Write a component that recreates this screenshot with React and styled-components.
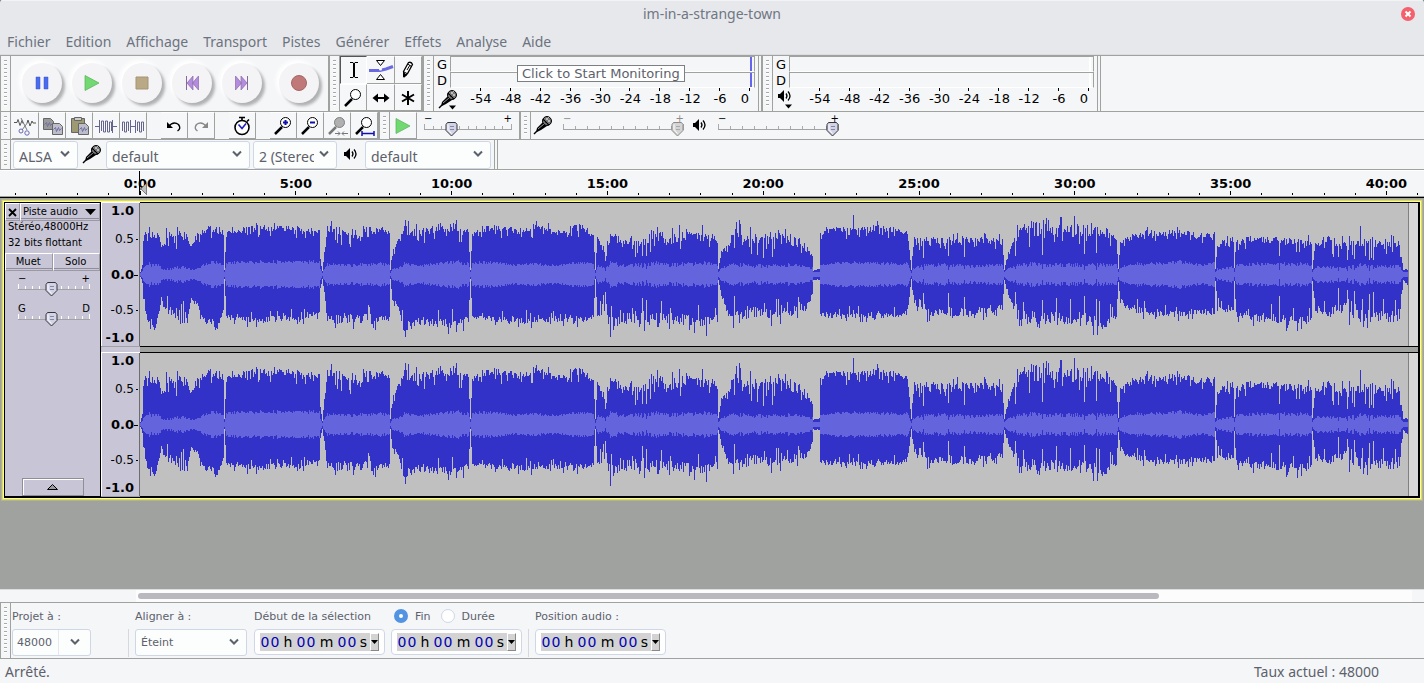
import React from "react";
import styled, { createGlobalStyle, css } from "styled-components";

const GlobalStyle = createGlobalStyle`
  * {
    box-sizing: border-box;
  }

  body {
    margin: 0;
    background: #4f7f8c;
    color: #5c616c;
    font-family: "Noto Sans", sans-serif;
    font-size: 14px;
  }

  button, input, select {
    margin: 0;
    padding: 0;
    border: 0;
    font: inherit;
    color: inherit;
  }

  svg {
    flex: none;
  }
`;

const ui = `"DejaVu Sans", sans-serif`;
const edge = "#a0a2a0";

const Window = styled.div`
  display: flex;
  flex-direction: column;
  min-height: 100vh;
  background: #a0a2a0;
  border-top-left-radius: 3px;
  border-top-right-radius: 3px;
  overflow: hidden;
`;

/* ---------- title and menu ---------- */

const TitleBar = styled.header`
  display: grid;
  grid-template-columns: 32px 1fr 32px;
  align-items: center;
  height: 28px;
  padding-bottom: 2px;
  background: #e7e8eb;
  border-top: 1px solid #f2f3f4;
  color: #6f7684;
`;

const Title = styled.h1`
  grid-column: 2;
  margin: 0;
  font-size: 14px;
  font-weight: 400;
  text-align: center;
`;

const CloseButton = styled.button`
  display: flex;
  justify-content: center;
  align-items: center;
  background: transparent;
`;

const MenuBar = styled.nav`
  display: flex;
  align-items: center;
  gap: 15px;
  height: 27px;
  padding: 0 7px;
  background: #e7e8eb;
  border-bottom: 1px solid #dcdde1;

  a {
    color: #6c7380;
    text-decoration: none;
  }
`;

/* ---------- toolbars ---------- */

const ToolRow = styled.div`
  display: flex;
  height: ${(p) => p.$height}px;
  background: #f5f6f8;
  border-top: 1px solid ${edge};
`;

const Bar = styled.section`
  display: flex;
  align-items: center;
  border-right: 1px solid ${edge};
  ${(p) =>
    p.$double &&
    css`
      border-right: 4px double ${edge};
    `}
  ${(p) =>
    p.$open &&
    css`
      border-right: 0;
    `}
`;

const Grip = styled.div`
  flex: none;
  align-self: stretch;
  width: 11px;
  padding: 4px 3px;
  border: 1px solid ${edge};
  border-width: 0 1px 0 1px;
  background: repeating-linear-gradient(#a8a8a8 0 1px, #fff 1px 2px, transparent 2px 4px) content-box #f7f8f9;
`;

const Transport = styled.div`
  display: flex;
  align-items: center;
  gap: 10px;
  width: 317px;
  padding: 0 0 2px 11px;
`;

const RoundButton = styled.button`
  display: flex;
  justify-content: center;
  align-items: center;
  width: 40px;
  height: 40px;
  border-radius: 50%;
  background: #f4f4f6;
  box-shadow: 3px 3px 3px #b0b1b3, -2px -2px 4px 1px #fff;

  &:last-child {
    margin-left: 7px;
  }
`;

const ToolGrid = styled.div`
  display: grid;
  grid-template-columns: 27px 28px 27px;
  grid-template-rows: 28px 27px;
`;

const ToolButton = styled.button`
  display: flex;
  justify-content: center;
  align-items: center;
  width: 27px;
  height: 100%;
  background: #f6f7f9;
  border-top: 1px solid #fff;
  border-right: 1px solid ${edge};
  border-bottom: 1px solid ${edge};

  ${ToolGrid} & {
    width: 100%;
  }

  ${(p) =>
    p.$pressed &&
    css`
      border-top: 1px solid #555;
      border-left: 1px solid #555;
      border-right-color: #fff;
      border-bottom-color: #fff;
    `}
`;

const EditButtons = styled.div`
  display: flex;
  align-self: stretch;
  margin: 0 ${(p) => p.$after || 0}px 0 ${(p) => p.$before || 0}px;
`;

const MeterArea = styled.div`
  position: relative;
  align-self: stretch;
`;

const Meter = styled.div`
  display: grid;
  grid-template-columns: 16px 305px;
  grid-template-rows: 16px 16px 22px;
  width: 324px;
  color: #000;
  font-family: ${ui};
  font-size: 13px;
  line-height: 16px;
`;

const Channel = styled.span`
  padding: 1px 0 0 3px;
`;

const MeterBar = styled.div`
  border: 1px solid ${edge};
  border-bottom-color: #fff;
  background: linear-gradient(${(p) => p.$peak}, ${(p) => p.$peak}) 299px 0 / 2px 100% no-repeat;
`;

const MeterIcon = styled.button`
  display: flex;
  align-items: flex-start;
  width: 24px;
  padding: 1px 0 0 4px;
  background: transparent;
`;

const Scale = styled.div`
  display: flex;
  padding-left: 16px;

  span {
    width: 30px;
    padding-top: 3px;
    text-align: center;
    background: linear-gradient(#000, #000) 14px 0 / 1px 3px no-repeat;
  }

  span:last-child {
    width: 20px;
  }
`;

const Hint = styled.button`
  position: absolute;
  left: 83px;
  top: 9px;
  height: 17px;
  padding: 0 4px;
  border: 1px solid #7d8083;
  background: #fff;
  color: #5c616c;
  font-family: ${ui};
  font-size: 13px;
  line-height: 15px;
  white-space: nowrap;
`;

/* ---------- sliders ---------- */

const SliderBox = styled.label`
  position: relative;
  display: block;
  width: ${(p) => p.$width}px;
  height: 22px;
  color: ${(p) => (p.$off ? "#8c8c8c" : "#000")};
  font-family: ${ui};
  font-size: 10px;
  line-height: 8px;

  svg {
    position: absolute;
    left: 0;
    top: 0;
    overflow: visible;
  }

  input {
    position: absolute;
    left: 0;
    top: 4px;
    width: 100%;
    height: 16px;
    opacity: 0;
  }
`;

const SliderEnds = styled.span`
  display: flex;
  justify-content: space-between;
`;

function Slider({ width, value, name, ends = ["−", "+"], off, steps = 10, light }) {
  const x = Math.round((width * value) / 100);
  const ticks = Array.from({ length: steps + 1 }, (_, i) => Math.round((i * (width - 1)) / steps));
  return (
    <SliderBox $width={width} $off={off}>
      <SliderEnds>
        <span>{ends[0]}</span>
        <span>{ends[1]}</span>
      </SliderEnds>
      <svg width={width} height="22" aria-hidden="true">
        {ticks.map((t, i) => (
          <path
            key={t}
            d={i % steps ? `M${t + 0.5} 11v3` : `M${t + 0.5} 9v5`}
            stroke={light ? "#fff" : "#aaa"}
          />
        ))}
        <path d={`M0 14.5h${width}`} stroke="#a3a3a3" />
        <path
          d={`M${x - 4.5} 7.5h8l1.500 2v6l-5.500 5.500-5.500-5.500v-6z`}
          fill={off ? "#d4d4d4" : "#d3d3e6"}
          stroke={off ? "#8b8b8b" : "#34343c"}
        />
        <path d={`M${x - 4} 9.500v5l3.500 4`} fill="none" stroke="#fff" />
        <path d={`M${x - 2} 11.500h4M${x - 2} 14.500h4`} stroke={off ? "#aaa" : "#8585a6"} />
      </svg>
      <input type="range" aria-label={name} defaultValue={value} disabled={off} />
    </SliderBox>
  );
}

const SliderSlot = styled.div`
  padding: 0 ${(p) => p.$right}px 0 ${(p) => p.$left}px;
`;

/* ---------- drop-downs ---------- */

const SelectBox = styled.span`
  position: relative;
  display: inline-flex;
  width: ${(p) => p.$width}px;
  height: ${(p) => (p.$small ? 27 : 28)}px;
  margin-right: ${(p) => p.$after || 0}px;

  svg {
    position: absolute;
    right: ${(p) => (p.$combo ? 11 : 8)}px;
    top: 9px;
    pointer-events: none;
  }
`;

const NativeSelect = styled.select`
  width: 100%;
  padding: 4px 22px 0 5px;
  appearance: none;
  background: #fcfdfd;
  border: 1px solid #cfd6e6;
  border-radius: 3px;
  ${(p) =>
    p.$small &&
    css`
      padding: 0 20px 0 5px;
      font-family: ${ui};
      font-size: 11px;
    `}
  ${(p) =>
    p.$combo &&
    css`
      padding-left: 4px;
      background: linear-gradient(#e6e8ee, #e6e8ee) 45px 0 / 1px 100% no-repeat #fcfdfd;
    `}
`;

function Chevron() {
  return (
    <svg width="10" height="8" viewBox="0 0 10 8" aria-hidden="true">
      <path d="M1 1.500l4 4 4-4" fill="none" stroke="#5c616c" strokeWidth="2" />
    </svg>
  );
}

function Select({ label, value, width, after, small, combo, id }) {
  return (
    <SelectBox $width={width} $after={after} $small={small} $combo={combo}>
      <NativeSelect id={id} aria-label={label} $small={small} $combo={combo}>
        <option>{value}</option>
      </NativeSelect>
      <Chevron />
    </SelectBox>
  );
}

const DeviceIcon = styled.span`
  display: flex;
  justify-content: center;
  width: ${(p) => p.$width}px;
`;

/* ---------- icons ---------- */

function Mic({ menu }) {
  return (
    <svg width="20" height="21" viewBox="0 0 20 21" aria-hidden="true">
      <path d="M1 19l3-3" stroke="#000" strokeWidth="1.500" />
      <path d="M3 17l1-4 6-6 4 4-6 4-4 2z" fill="#000" />
      <path d="M5 14l6-5" stroke="#999" />
      <circle cx="14" cy="6" r="4.500" fill="#777" stroke="#000" />
      <path d="M11 4l5 5M13 3l4 4M11 7l5-5M13 9l4-4" stroke="#ddd" strokeWidth="0.700" />
      <path d="M10 4l6 6" stroke="#000" strokeWidth="1.500" />
      {menu && <path d="M11 16.500h7l-3.500 4z" fill="#000" />}
    </svg>
  );
}

function Speaker({ menu }) {
  return (
    <svg width="16" height={menu ? 20 : 15} viewBox={menu ? "0 0 16 20" : "0 0 16 15"} aria-hidden="true">
      <path d="M1 5h2l4-4v12l-4-4h-2z" fill="#000" />
      <path d="M9 4.500q2 2.500 0 5M11 2.500q4 4.500 0 9" fill="none" stroke="#000" strokeWidth="1.300" />
      {menu && <path d="M8 15.500h7l-3.500 4z" fill="#000" />}
    </svg>
  );
}

const Pause = () => (
  <svg width="14" height="14">
    <path d="M1 1h4v12H1zM9 1h4v12H9z" fill="#4a6af0" stroke="#3c55c8" strokeWidth="0.500" />
  </svg>
);
const Play = () => (
  <svg width="16" height="16">
    <path d="M1 .5L15 8 1 15.500z" fill="#72d872" stroke="#55b055" strokeWidth="0.700" />
  </svg>
);
const Stop = () => (
  <svg width="14" height="14">
    <path d="M1 1h12v12H1z" fill="#baa985" stroke="#a49575" />
  </svg>
);
const Rewind = () => (
  <svg width="14" height="16">
    <path d="M1.500 1v14" stroke="#85699d" />
    <path d="M8 1v14L2 8zM13.500 1v14L7.500 8z" fill="#b58be0" stroke="#8a6ba8" strokeWidth="0.700" />
  </svg>
);
const Forward = () => (
  <svg width="14" height="16">
    <path d="M.5 1v14l6-7zM6 1v14l6-7z" fill="#b58be0" stroke="#8a6ba8" strokeWidth="0.700" />
    <path d="M12.500 1v14" stroke="#85699d" />
  </svg>
);
const Record = () => (
  <svg width="18" height="18">
    <circle cx="9" cy="9" r="7.500" fill="#c07878" stroke="#a56666" />
  </svg>
);

const Glyph = ({ children, ...rest }) => (
  <svg width="24" height="24" viewBox="0 0 24 24" fill="none" stroke="#000" aria-hidden="true" {...rest}>
    {children}
  </svg>
);

const Caret = () => (
  <Glyph>
    <path d="M8 4.500h3l1 1 1-1h3M8 19.500h3l1-1 1 1h3" />
    <path d="M12 5v14" strokeWidth="2" />
  </Glyph>
);
const Envelope = () => (
  <svg width="26" height="24" viewBox="0 0 26 24" fill="none" aria-hidden="true">
    <path d="M1 12.500h11l6-1.500 7-2.500" stroke="#6a6ae0" strokeWidth="3" />
    <path d="M8.500 2.500h8l-4 5zM8.500 21.500h8l-4-5z" fill="#fff" stroke="#000" />
    <circle cx="12.500" cy="11" r="1.500" fill="#fff" />
  </svg>
);
const Pencil = () => (
  <Glyph>
    <path d="M8.500 18.500l-1-5 5-9q3-1 4 2l-5 9z" fill="#fff" strokeWidth="1.300" />
    <path d="M12 6l4 3M7 13.500l4 2M11 12l3-5" />
    <path d="M7.500 15v4l3-2z" fill="#000" />
  </Glyph>
);
const Lens = ({ dim, children }) => (
  <Glyph>
    <path d="M11 13l-7 7" stroke={dim ? "#777" : "#000"} strokeWidth="2.500" />
    <circle cx="14.500" cy="8.500" r="5" fill={dim ? "#b0b0b0" : "#fff"} stroke={dim ? "#808080" : "#000"} />
    {children}
  </Glyph>
);
const Shift = () => (
  <Glyph>
    <path d="M5 12h14" strokeWidth="2" />
    <path d="M9 7.500v9L3.500 12zM15 7.500v9l5.500-4.500z" fill="#000" stroke="none" />
  </Glyph>
);
const Multi = () => (
  <Glyph strokeWidth="2">
    <path d="M12 5v14M6 8.500l12 7M18 8.500l-12 7" />
  </Glyph>
);
const Cut = () => (
  <Glyph stroke="#555">
    <path d="M1 8.500h3l1-3 2 6 2-5 1 3M14 9l1-3 2 6 2-5 1 2h3" />
    <path d="M8 4l6 12M15 8l-6 8" stroke="#777" />
    <circle cx="8" cy="17" r="2" stroke="#6a6ab4" />
    <circle cx="14" cy="19" r="2.200" stroke="#6a6ab4" />
  </Glyph>
);
const Sheet = ({ x, y, fill }) => (
  <>
    <path d={`M${x} ${y}h7l3 3v8h-10z`} fill={fill} stroke="#666" />
    <path d={`M${x + 1} ${y + 6}l2-2 1 4 2-4 1 3 2-2`} stroke="#7070a0" />
  </>
);
const Copy = () => (
  <Glyph>
    <Sheet x={3.5} y={4.5} fill="#999" />
    <Sheet x={12.5} y={9.5} fill="#bcbccb" />
  </Glyph>
);
const Paste = () => (
  <Glyph>
    <path d="M4.500 4.500h13v14h-13z" fill="#9d9a72" stroke="#666" />
    <path d="M7.500 3.500h7v3h-7z" fill="#ccc" stroke="#666" />
    <Sheet x={11.5} y={9.5} fill="#bcbccb" />
  </Glyph>
);
const Trim = () => (
  <Glyph stroke="#64648c">
    <path d="M1 12.500h5M18 12.500h5M5.500 6v13M18.500 6v13M7.500 17V7h2v11h2V7h2v11h2V8h2v9" />
  </Glyph>
);
const Silence = () => (
  <Glyph stroke="#64648c">
    <path d="M1.500 17V8h2v10h2V8h2v9M9.500 6v13M9 12.500h5M14.500 6v13M16.500 17V8h2v10h2V8h2v9" />
  </Glyph>
);
const Undo = () => (
  <Glyph>
    <path d="M6.500 12.500q5-6 10-2 3 4-1 6.500" strokeWidth="1.400" />
    <path d="M5 8v6h6z" fill="#000" stroke="none" />
  </Glyph>
);
const Redo = () => (
  <Glyph stroke="#888">
    <path d="M17.500 12.500q-5-6-10-2-3 4 1 6.500" strokeWidth="1.400" />
    <path d="M19 8v6h-6z" fill="#888" stroke="none" />
  </Glyph>
);
const Clock = () => (
  <Glyph>
    <circle cx="12" cy="13.500" r="7" fill="#fff" strokeWidth="1.600" />
    <path d="M9 3.500h6M12 3v4M17 7.500l2-2" strokeWidth="1.600" />
    <path d="M8.500 10.500l3.500 4 4-5" stroke="#2020c0" strokeWidth="1.600" />
  </Glyph>
);

/* ---------- timeline ---------- */

const Ruler = styled.div`
  height: 29px;
  background: #f5f6f8;
  border-top: 1px solid ${edge};
  border-bottom: 1px solid #000;

  svg {
    display: block;
  }

  text {
    font-family: ${ui};
    font-size: 13px;
    font-weight: 700;
    text-anchor: middle;
  }
`;

const START = 140;
const VIEW = 1424;
const MINUTE = 31.16;

function TimeRuler() {
  const minutes = Array.from({ length: 46 }, (_, i) => i - 4);
  const at = (m) => `${((START + m * MINUTE) / VIEW) * 100}%`;
  return (
    <Ruler>
      <svg width="100%" height="27" shapeRendering="crispEdges">
        <path d="M0 .5H4000" stroke="#fff" />
        <path d="M0 26.500H4000" stroke="#a0a2a0" />
        {minutes.map((m) => (
          <line key={m} x1={at(m)} x2={at(m)} y1={m % 5 ? 23 : 21} y2="25" stroke="#000" />
        ))}
        {minutes
          .filter((m) => m >= 0 && m % 5 === 0)
          .map((m) => (
            <text key={m} x={at(m)} y="18">{`${m}:00`}</text>
          ))}
        <path d="M146.500 14v10l-6-5z" fill="#c0c0c0" stroke="#808080" />
        <path d="M139.500 1v24" stroke="#000" />
      </svg>
    </Ruler>
  );
}

/* ---------- track ---------- */

const TrackFrame = styled.main`
  display: grid;
  grid-template-columns: 96px 39px 1fr;
  margin: 4px 4px 2px;
  background: #a0a2a0;
  border: 1px solid #000;
  border-width: 1px 2px 2px 1px;
  outline: 1px solid #ffff80;
  box-shadow: 0 0 0 2px #d8d878, 0 0 0 3px #b4b48c;
`;

const TrackPanel = styled.aside`
  display: flex;
  flex-direction: column;
  background: #c8c6d6;
  border-right: 1px solid #000;
  color: #000;
  font-family: ${ui};
  font-size: 10px;
  line-height: 16px;
`;

const PanelRow = styled.div`
  display: grid;
  grid-template-columns: ${(p) => p.$columns};
  height: 16px;
  border-bottom: 1px solid #8f8e98;
`;

const PanelButton = styled.button`
  display: flex;
  justify-content: ${(p) => (p.$spread ? "space-between" : "center")};
  align-items: center;
  padding: 0 3px 0 2px;
  background: transparent;
  border: 1px solid #fff;
  border-right-color: #9a99a4;
  border-bottom-color: #9a99a4;
  white-space: nowrap;
`;

const Format = styled.p`
  height: 34px;
  margin: 0;
  padding-left: 3px;
`;

const Gains = styled.div`
  display: grid;
  gap: 8px;
  flex: 1;
  align-content: start;
  padding: 6px 0 0 13px;
`;

const Collapse = styled.button`
  display: flex;
  justify-content: center;
  align-items: center;
  align-self: center;
  width: 62px;
  height: 18px;
  background: transparent;
  border: 1px solid #8f8e98;
  box-shadow: inset 1px 1px #fff;
`;

const Lanes = styled.div`
  display: grid;
  grid-template-rows: 143px 143px;
  gap: 7px;
`;

const Scales = styled(Lanes)`
  background: #c8c6d6;
`;

const Levels = styled.div`
  display: grid;
  grid-template-rows: 16px 40px 31px 40px 16px;
  align-items: center;
  background: #c8c6d6;
  border-left: 1px solid #fff;
  border-right: 1px solid #6c6c70;
  box-shadow: 0 1px #a0a2a0, 0 -1px #fff;
  color: #000;
  font-family: ${ui};
  text-align: right;
`;

const Level = styled.span`
  padding-right: 5px;
  font-size: ${(p) => (p.$bold ? "13px" : "12px")};
  font-weight: ${(p) => (p.$bold ? 700 : 400)};
  line-height: 16px;
  background: linear-gradient(#000, #000) right 1px top 8px / ${(p) => p.$tick}px 1px no-repeat;
`;

const Lane = styled.div`
  display: flex;
  padding-right: 9px;
  background: #d8d8d8;
  box-shadow: 0 1px #000, 0 -1px #000;

  svg {
    display: block;
    flex: 1;
    min-width: 0;
    height: 143px;
    background: #c0c0c0;
    border-right: 1px solid #808080;
  }
`;

// [x, peak above, peak below, rms, jitter]
const shape = [
  [0, 2, 2, 1, 0], [2, 8, 8, 3, 0.1], [3, 32, 24, 5, 0.1], [5, 46, 34, 8, 0.16], [9, 42, 48, 10, 0.18],
  [13, 38, 50, 9, 0.18], [18, 42, 42, 9, 0.16], [21, 28, 22, 6, 0.1], [24, 28, 30, 4, 0.1], [27, 42, 34, 5, 0.18],
  [36, 40, 38, 6, 0.2], [45, 38, 46, 7, 0.2], [51, 27, 25, 4, 0.1], [58, 40, 32, 6, 0.15], [66, 44, 48, 10, 0.12],
  [77, 45, 50, 12, 0.14], [83, 40, 36, 9, 0.08], [84, 4, 4, 2, 0], [86, 40, 42, 11, 0.07], [110, 46, 46, 12, 0.09],
  [140, 46, 43, 12, 0.09], [160, 45, 43, 12, 0.09], [179, 43, 38, 12, 0.09], [180, 14, 14, 5, 0.1], [182, 3, 4, 1, 0],
  [184, 22, 18, 6, 0.1], [187, 46, 46, 10, 0.13], [205, 40, 43, 9, 0.16], [230, 42, 44, 10, 0.16], [249, 44, 44, 10, 0.1],
  [250, 4, 4, 1, 0], [252, 22, 24, 5, 0.1], [258, 34, 34, 6, 0.1], [264, 44, 52, 10, 0.14], [280, 43, 46, 8, 0.14],
  [300, 47, 48, 11, 0.12], [318, 46, 50, 12, 0.14], [326, 42, 45, 9, 0.1], [328, 43, 46, 12, 0.1], [330, 4, 4, 2, 0],
  [332, 40, 42, 11, 0.08], [352, 47, 44, 12, 0.09], [374, 43, 45, 9, 0.1], [394, 47, 45, 10, 0.1], [418, 42, 44, 8, 0.1],
  [440, 47, 45, 12, 0.1], [453, 40, 42, 10, 0.06], [455, 4, 4, 1, 0], [457, 38, 42, 8, 0.1], [464, 25, 28, 6, 0.16],
  [470, 36, 52, 11, 0.2], [482, 32, 42, 8, 0.2], [500, 33, 46, 9, 0.22], [515, 39, 42, 11, 0.16], [530, 34, 46, 9, 0.22],
  [545, 40, 44, 10, 0.18], [563, 36, 48, 11, 0.2], [577, 34, 42, 9, 0.12], [578, 5, 5, 2, 0], [581, 22, 20, 6, 0.1],
  [588, 28, 36, 8, 0.1], [594, 38, 40, 9, 0.24], [610, 34, 35, 8, 0.22], [632, 35, 37, 8, 0.24], [655, 33, 36, 9, 0.22],
  [666, 24, 32, 7, 0.12], [672, 18, 20, 6, 0.1], [673, 4, 5, 2, 0.1], [679, 5, 5, 2, 0.1], [680, 40, 38, 9, 0.08],
  [692, 45, 41, 11, 0.08], [714, 43, 40, 11, 0.1], [740, 46, 41, 11, 0.1], [760, 42, 39, 10, 0.1], [767, 42, 38, 11, 0.08],
  [771, 4, 4, 1, 0], [773, 32, 26, 6, 0.1], [783, 34, 37, 9, 0.15], [800, 32, 36, 9, 0.18], [830, 34, 38, 8, 0.16],
  [862, 32, 33, 9, 0.16], [864, 4, 5, 2, 0], [867, 18, 18, 5, 0.1], [872, 30, 30, 7, 0.12], [880, 44, 42, 10, 0.2],
  [910, 43, 43, 9, 0.2], [940, 43, 44, 9, 0.2], [965, 42, 46, 9, 0.18], [976, 34, 40, 9, 0.1], [978, 5, 7, 2, 0],
  [980, 32, 26, 7, 0.1], [995, 36, 34, 10, 0.14], [1010, 41, 38, 10, 0.1], [1040, 41, 39, 12, 0.1], [1060, 39, 37, 9, 0.1],
  [1074, 40, 39, 11, 0.06], [1075, 5, 6, 2, 0], [1077, 28, 28, 5, 0.2], [1093, 34, 36, 7, 0.14], [1094, 12, 12, 4, 0],
  [1096, 30, 38, 8, 0.15], [1112, 36, 42, 10, 0.13], [1140, 33, 44, 10, 0.14], [1160, 32, 46, 10, 0.14], [1171, 30, 42, 9, 0.1],
  [1172, 5, 6, 2, 0], [1175, 30, 34, 7, 0.16], [1190, 34, 36, 7, 0.2], [1207, 26, 32, 6, 0.2], [1220, 33, 42, 9, 0.22],
  [1240, 30, 40, 7, 0.22], [1259, 30, 42, 8, 0.16], [1262, 12, 14, 3, 0.1], [1263, 4, 5, 2, 0.15], [1267, 5, 10, 2, 0.2],
];

const notches = [465, 502, 506, 783, 808, 824, 875, 902, 944, 956, 1094, 1139, 1198, 1207, 1214, 1229, 1233];
const spikes = [591, 599, 630, 638, 645, 713, 877, 895, 935, 1048, 1168, 1209, 1220];

function buildWave(seed, above, below) {
  let state = seed;
  const rand = () => {
    state = (state * 1664525 + 1013904223) % 4294967296;
    return state / 4294967296;
  };
  let peak = "";
  let rms = "";
  let k = 0;
  for (let x = 0; x < 1268; x++) {
    while (k < shape.length - 2 && x >= shape[k + 1][0]) k++;
    const a = shape[k];
    const b = shape[k + 1];
    const t = Math.min(1, (x - a[0]) / (b[0] - a[0]));
    const [, up, down, soft, jitter] = a.map((v, i) => v + (b[i] - v) * t);
    const vary = (v) => {
      const r = rand();
      const burst = r > 0.9 ? jitter : r < 0.1 ? -jitter * 1.6 : 0;
      return v * (1 + jitter * (rand() - 0.5) * 1.6 + burst);
    };
    const notch = notches.includes(x) ? 0.5 : 1;
    const spike = spikes.includes(x);
    const top = Math.round(Math.min(70, vary(up) * notch * above * (spike ? 1.3 : 1)));
    const bottom = Math.round(Math.min(62, vary(down) * notch * below * (spike ? 1.12 : 1)));
    const inner = Math.max(1, Math.round(soft * notch * (1 + (rand() - 0.5) * (jitter * 2 + 0.1))));
    peak += `M${x} ${71 - top}h1V${72 + bottom}h-1z`;
    rms += `M${x} ${71 - inner}h1V${72 + inner}h-1z`;
  }
  return { peak, rms };
}

const channels = [buildWave(7, 1, 1), buildWave(7, 1.13, 0.94)];

function Waveform({ wave }) {
  return (
    <svg viewBox="0 0 1268 143" preserveAspectRatio="none" shapeRendering="crispEdges" aria-hidden="true">
      <path d={wave.peak} fill="#3232c8" />
      <path d={wave.rms} fill="#6464dc" />
    </svg>
  );
}

function LevelScale() {
  return (
    <Levels>
      <Level $bold $tick={0}>1.0</Level>
      <Level $tick={2}>0.5</Level>
      <Level $bold $tick={4}>0.0</Level>
      <Level $tick={2}>-0.5</Level>
      <Level $bold $tick={0}>-1.0</Level>
    </Levels>
  );
}

/* ---------- bottom ---------- */

const Empty = styled.div`
  flex: 1;
`;

const ScrollRow = styled.div`
  height: 13px;
  padding: 0 12px 0 136px;
  background: #f5f6f8;
  border-top: 1px solid #dcdde0;
`;

const ScrollTrack = styled.div`
  height: 12px;
  padding: 3px 2px;
  background: #fcfcfd;
`;

const ScrollThumb = styled.div`
  width: 80.3%;
  height: 6px;
  border-radius: 3px;
  background: #b8b8be;
`;

const SelectionBar = styled.footer`
  display: flex;
  height: 57px;
  background: #f5f6f8;
  border-top: 1px solid ${edge};
  border-bottom: 1px solid ${edge};
  font-family: ${ui};
  font-size: 11px;
`;

const Field = styled.div`
  display: grid;
  grid-template-rows: 26px 27px;
  align-items: center;
  align-self: start;
  width: ${(p) => p.$width}px;
  padding-left: ${(p) => p.$left || 1}px;
`;

const Divider = styled.i`
  align-self: end;
  width: 1px;
  height: 28px;
  margin-bottom: 1px;
  background: #d6d8dd;
`;

const RadioRow = styled.div`
  display: flex;
  align-items: center;
  gap: 10px;
  padding-left: 3px;

  label {
    display: flex;
    align-items: center;
    gap: 7px;
  }

  input {
    appearance: none;
    width: 14px;
    height: 14px;
    border: 1px solid #cfd6e6;
    border-radius: 50%;
    background: #fff;
  }

  input:checked {
    border: 5px solid #5294e2;
  }
`;

const TimeBox = styled.div`
  display: flex;
  align-items: center;
  align-self: start;
  width: 131px;
  height: 26px;
  padding: 0 5px;
  background: #fff;
  border: 1px solid #cfd6e6;
  border-radius: 4px;
`;

const TimeDigits = styled.div`
  display: grid;
  grid-template-columns: 10px 10px 16px 10px 10px 21px 10px 10px 1fr;
  align-items: center;
  flex: 1;
  height: 18px;
  background: #d3d3d3;
  color: #000;
  font-size: 14px;
  line-height: 18px;
  text-align: center;
`;

const Digit = styled.input`
  width: 10px;
  height: 18px;
  background: transparent;
  color: #0000b4;
  text-align: center;
`;

const TimeMenu = styled.button`
  display: flex;
  justify-content: center;
  align-items: center;
  width: 9px;
  height: 18px;
  background: #d3d3d3;
  border: 1px solid #fff;
  border-right-color: #888;
  border-bottom-color: #888;
`;

const StatusBar = styled.div`
  display: flex;
  justify-content: space-between;
  align-items: center;
  height: 24px;
  padding: 0 45px 0 5px;
  background: #f5f6f8;
`;

function TimeField({ name }) {
  return (
    <TimeBox role="group" aria-label={name}>
      <TimeDigits>
        {["h", "m", "s"].map((unit) => (
          <React.Fragment key={unit}>
            <Digit aria-label={`${name} ${unit} 1`} defaultValue="0" maxLength={1} />
            <Digit aria-label={`${name} ${unit} 2`} defaultValue="0" maxLength={1} />
            <span>{unit}</span>
          </React.Fragment>
        ))}
      </TimeDigits>
      <TimeMenu aria-label={`${name} format`}>
        <svg width="7" height="4">
          <path d="M0 0h7L3.500 4z" fill="#000" />
        </svg>
      </TimeMenu>
    </TimeBox>
  );
}

function LevelMeter({ name, icon, peak, children }) {
  return (
    <MeterArea>
      <Meter>
        <Channel>G</Channel>
        <MeterBar $peak={peak} />
        <Channel>D</Channel>
        <MeterBar $peak={peak} />
        <MeterIcon aria-label={name}>{icon}</MeterIcon>
        <Scale>
          {[-54, -48, -42, -36, -30, -24, -18, -12, -6, 0].map((db) => (
            <span key={db}>{db}</span>
          ))}
        </Scale>
      </Meter>
      {children}
    </MeterArea>
  );
}

const menus = ["Fichier", "Edition", "Affichage", "Transport", "Pistes", "Générer", "Effets", "Analyse", "Aide"];

function App() {
  return (
    <Window>
      <GlobalStyle />
      <TitleBar>
        <Title>im-in-a-strange-town</Title>
        <CloseButton aria-label="Fermer">
          <svg width="14" height="14">
            <circle cx="7" cy="7" r="7" fill="#f4606c" />
            <path d="M4.500 4.500l5 5M9.500 4.500l-5 5" stroke="#fff" strokeWidth="2" />
          </svg>
        </CloseButton>
      </TitleBar>
      <MenuBar>
        {menus.map((m) => (
          <a href="#" key={m}>
            {m}
          </a>
        ))}
      </MenuBar>

      <ToolRow $height={56}>
        <Bar>
          <Grip />
          <Transport>
            <RoundButton aria-label="Pause"><Pause /></RoundButton>
            <RoundButton aria-label="Lecture"><Play /></RoundButton>
            <RoundButton aria-label="Stop"><Stop /></RoundButton>
            <RoundButton aria-label="Début"><Rewind /></RoundButton>
            <RoundButton aria-label="Fin"><Forward /></RoundButton>
            <RoundButton aria-label="Enregistrer"><Record /></RoundButton>
          </Transport>
        </Bar>
        <Bar>
          <Grip />
          <ToolGrid>
            <ToolButton $pressed aria-label="Sélection"><Caret /></ToolButton>
            <ToolButton aria-label="Niveau"><Envelope /></ToolButton>
            <ToolButton aria-label="Retouche"><Pencil /></ToolButton>
            <ToolButton aria-label="Zoom"><Lens /></ToolButton>
            <ToolButton aria-label="Glissement"><Shift /></ToolButton>
            <ToolButton aria-label="Multi-outils"><Multi /></ToolButton>
          </ToolGrid>
        </Bar>
        <Bar $double>
          <Grip />
          <LevelMeter name="Niveau d'enregistrement" icon={<Mic menu />} peak="#6464f0">
            <Hint>Click to Start Monitoring</Hint>
          </LevelMeter>
        </Bar>
        <Bar $double>
          <Grip />
          <LevelMeter name="Niveau de lecture" icon={<Speaker menu />} peak="#fff" />
        </Bar>
      </ToolRow>

      <ToolRow $height={28}>
        <Bar>
          <Grip />
          <EditButtons $before={1} $after={14}>
            <ToolButton aria-label="Couper"><Cut /></ToolButton>
            <ToolButton aria-label="Copier"><Copy /></ToolButton>
            <ToolButton aria-label="Coller"><Paste /></ToolButton>
            <ToolButton aria-label="Rogner"><Trim /></ToolButton>
            <ToolButton aria-label="Silence"><Silence /></ToolButton>
          </EditButtons>
          <EditButtons $after={14}>
            <ToolButton aria-label="Annuler"><Undo /></ToolButton>
            <ToolButton aria-label="Refaire"><Redo /></ToolButton>
          </EditButtons>
          <EditButtons $after={14}>
            <ToolButton aria-label="Synchroniser"><Clock /></ToolButton>
          </EditButtons>
          <EditButtons>
            <ToolButton aria-label="Zoom avant">
              <Lens><path d="M12 8.500h5M14.500 6v5" stroke="#1010b0" strokeWidth="2" /></Lens>
            </ToolButton>
            <ToolButton aria-label="Zoom arrière">
              <Lens><path d="M12 8.500h5" stroke="#1010b0" strokeWidth="2" /></Lens>
            </ToolButton>
            <ToolButton aria-label="Zoom sélection">
              <Lens dim><path d="M10 19.500h5M17 19.500h6M13 17.500l2 2-2 2M19 17.500l-2 2 2 2" stroke="#777" /></Lens>
            </ToolButton>
            <ToolButton aria-label="Zoom projet">
              <Lens><path d="M10 19.500h12M10 17v5M22 17v5" stroke="#1010b0" strokeWidth="1.500" /></Lens>
            </ToolButton>
          </EditButtons>
        </Bar>
        <Bar>
          <Grip />
          <EditButtons>
            <ToolButton aria-label="Lecture à vitesse variable"><Play /></ToolButton>
          </EditButtons>
          <SliderSlot $left={7} $right={7}>
            <Slider name="Vitesse de lecture" width={88} value={32} />
          </SliderSlot>
        </Bar>
        <Bar $open>
          <Grip />
          <DeviceIcon $width={24}><Mic /></DeviceIcon>
          <SliderSlot $left={8} $right={6}>
            <Slider name="Volume d'enregistrement" width={121} value={95} off />
          </SliderSlot>
          <DeviceIcon $width={20}><Speaker /></DeviceIcon>
          <SliderSlot $left={8} $right={12}>
            <Slider name="Volume de lecture" width={121} value={95} />
          </SliderSlot>
        </Bar>
      </ToolRow>

      <ToolRow $height={30}>
        <Bar $double>
          <Grip />
          <SliderSlot $left={2} $right={0}>
            <Select label="Hôte audio" value="ALSA" width={65} />
          </SliderSlot>
          <DeviceIcon $width={28}><Mic /></DeviceIcon>
          <Select label="Entrée" value="default" width={144} after={3} />
          <Select label="Canaux" value="2 (Stereo)" width={84} />
          <DeviceIcon $width={28}><Speaker /></DeviceIcon>
          <Select label="Sortie" value="default" width={126} after={3} />
        </Bar>
      </ToolRow>

      <TimeRuler />

      <TrackFrame>
        <TrackPanel>
          <PanelRow $columns="15px 1fr">
            <PanelButton aria-label="Fermer la piste">
              <svg width="9" height="9">
                <path d="M1 1l7 7M8 1L1 8" stroke="#000" strokeWidth="1.800" />
              </svg>
            </PanelButton>
            <PanelButton $spread>
              Piste audio
              <svg width="11" height="6">
                <path d="M0 0h11L5.500 6z" />
              </svg>
            </PanelButton>
          </PanelRow>
          <Format>
            Stéréo,48000Hz
            <br />
            32 bits flottant
          </Format>
          <PanelRow $columns="1fr 1fr">
            <PanelButton>Muet</PanelButton>
            <PanelButton>Solo</PanelButton>
          </PanelRow>
          <Gains>
            <Slider name="Gain" width={72} value={47} light />
            <Slider name="Panoramique" width={72} value={47} ends={["G", "D"]} light />
          </Gains>
          <Collapse aria-label="Réduire">
            <svg width="11" height="6">
              <path d="M.5 5.500h10L5.500 .5z" fill="#9a99a4" stroke="#000" />
            </svg>
          </Collapse>
        </TrackPanel>
        <Scales>
          <LevelScale />
          <LevelScale />
        </Scales>
        <Lanes>
          {channels.map((wave, i) => (
            <Lane key={i}>
              <Waveform wave={wave} />
            </Lane>
          ))}
        </Lanes>
      </TrackFrame>

      <Empty />

      <ScrollRow>
        <ScrollTrack>
          <ScrollThumb />
        </ScrollTrack>
      </ScrollRow>

      <SelectionBar>
        <Grip />
        <Field $width={117}>
          <label htmlFor="rate">Projet à :</label>
          <Select id="rate" value="48000" width={79} small combo />
        </Field>
        <Divider />
        <Field $width={119} $left={6}>
          <label htmlFor="snap">Aligner à :</label>
          <Select id="snap" value="Éteint" width={112} small />
        </Field>
        <Field $width={137} $left={6}>
          <span>Début de la sélection</span>
          <TimeField name="Début de la sélection" />
        </Field>
        <Field $width={143} $left={6}>
          <RadioRow>
            <label>
              <input type="radio" name="end" defaultChecked />
              Fin
            </label>
            <label>
              <input type="radio" name="end" />
              Durée
            </label>
          </RadioRow>
          <TimeField name="Fin" />
        </Field>
        <Divider />
        <Field $width={143} $left={6}>
          <span>Position audio :</span>
          <TimeField name="Position audio" />
        </Field>
      </SelectionBar>

      <StatusBar>
        <span>Arrêté.</span>
        <span>Taux actuel : 48000</span>
      </StatusBar>
    </Window>
  );
}

export default App;
